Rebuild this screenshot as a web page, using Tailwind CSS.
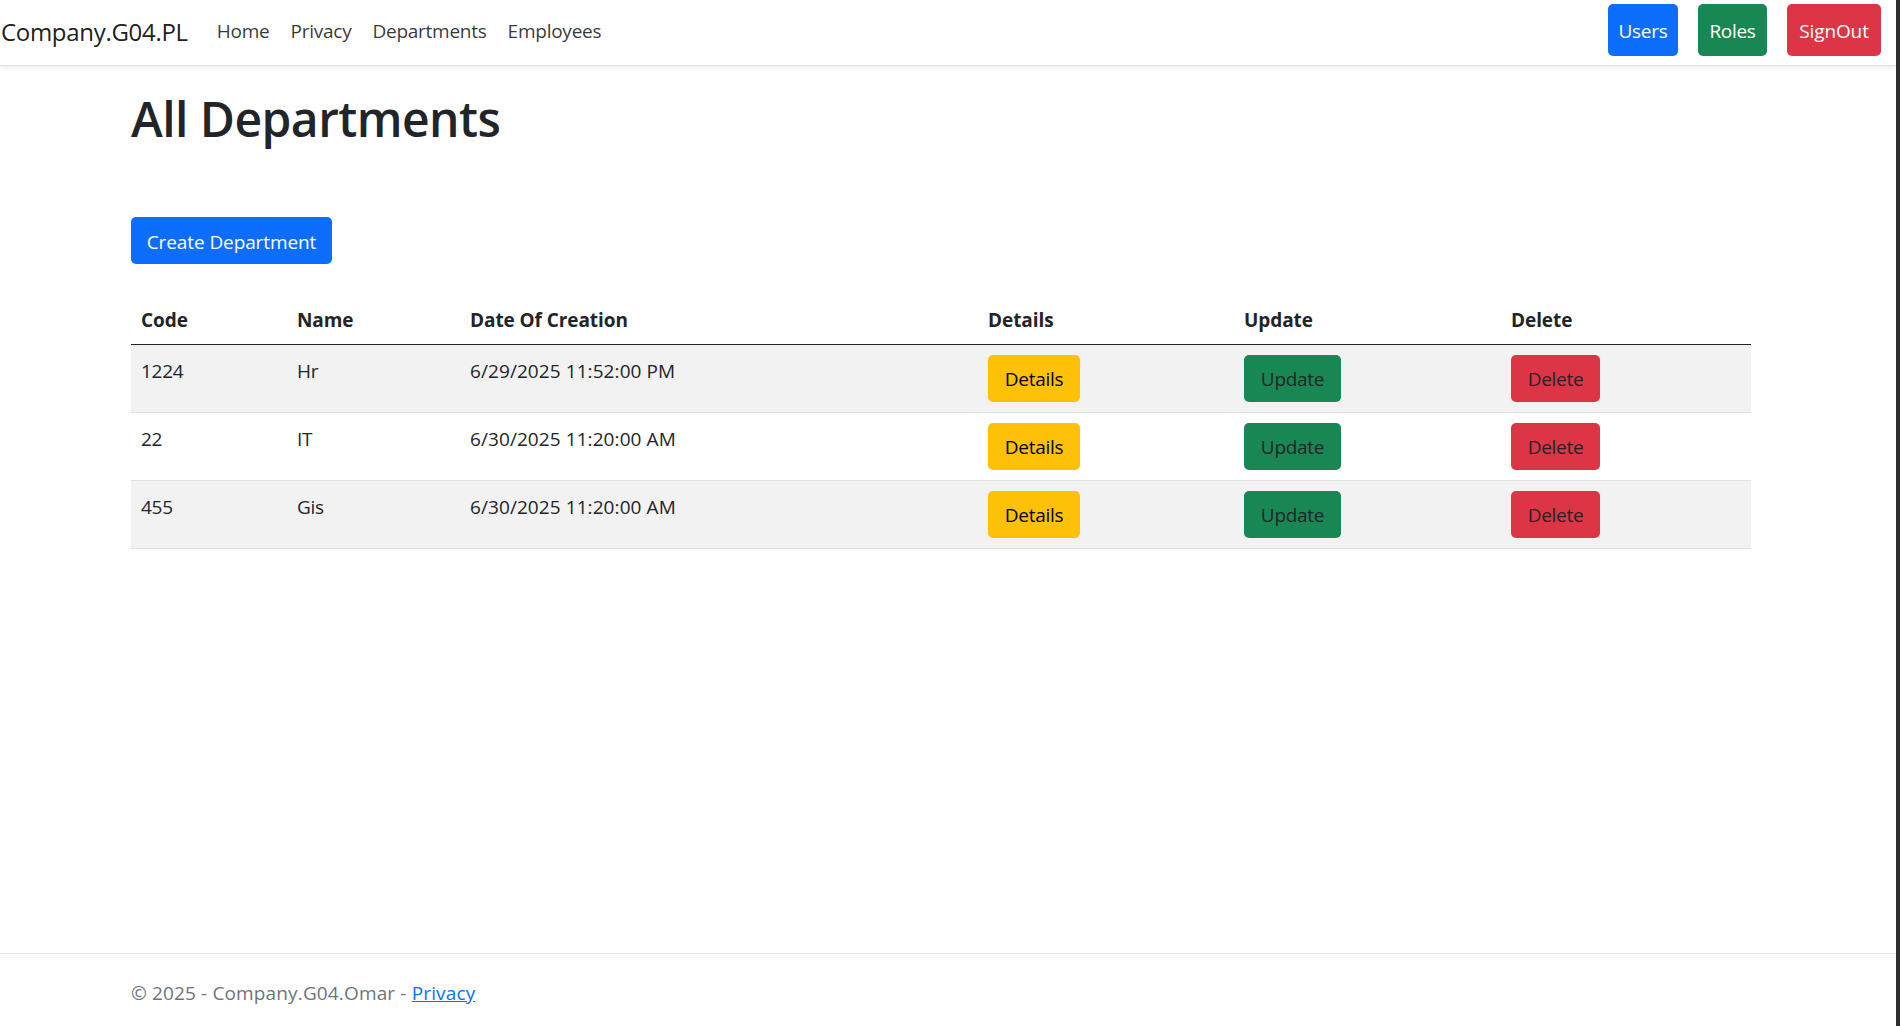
<!DOCTYPE html>
<html lang="en">
<head>
<meta charset="utf-8">
<title>All Departments</title>
<script src="https://cdn.jsdelivr.net/npm/@tailwindcss/browser@4"></script>
</head>
<body class="bg-white font-['Open_Sans','Noto_Sans',sans-serif] text-[19px] text-[#212529] tracking-[-0.3px] h-[1026px] overflow-hidden flex">
<div class="flex-1 min-w-0 flex flex-col">
<header class="h-[66px] shrink-0 flex items-center border-b border-[#dee2e6] shadow-[0_2px_5px_rgba(0,0,0,0.08)] pl-px pr-[15px] pb-[2px]">
  <a class="text-[24px] text-black/90 mr-[29px]">Company.G04.PL</a>
  <nav class="flex gap-[21px] text-black/80 tracking-[-0.25px]">
    <a>Home</a><a>Privacy</a><a>Departments</a><a>Employees</a>
  </nav>
  <div class="ml-auto flex gap-5 text-white self-start mt-[4px]">
    <a class="h-[52px] w-[70px] pt-[3px] flex items-center justify-center rounded-[5px] bg-[#0d6efd]">Users</a>
    <a class="h-[52px] w-[69px] pt-[3px] flex items-center justify-center rounded-[5px] bg-[#198754]">Roles</a>
    <a class="h-[52px] w-[94px] pt-[3px] flex items-center justify-center rounded-[5px] bg-[#dc3545] tracking-[-0.1px]">SignOut</a>
  </div>
</header>
<main class="flex-1 pl-[131px] pr-[145px]">
  <h1 class="text-[48px] font-semibold leading-[58px] mt-[24px] tracking-[-0.55px]">All Departments</h1>
  <a class="inline-flex items-center justify-center h-[47px] w-[201px] mt-[69px] pt-[4px] rounded-[5px] bg-[#0d6efd] text-white tracking-[-0.1px]">Create Department</a>
  <table class="w-[1620px] mt-[24px] table-fixed border-collapse">
    <thead>
      <tr class="h-[56px] border-b-[1.5px] border-[#212529] text-left font-bold tracking-[-0.08px]">
        <th class="w-[156px] pl-[10px] pt-[9px]">Code</th>
        <th class="w-[173px] pl-[10px] pt-[9px]">Name</th>
        <th class="w-[518px] pl-[10px] pt-[9px]">Date Of Creation</th>
        <th class="w-[256px] pl-[10px] pt-[9px]">Details</th>
        <th class="w-[267px] pl-[10px] pt-[9px]">Update</th>
        <th class="pl-[10px] pt-[9px]">Delete</th>
      </tr>
    </thead>
    <tbody>
      <tr class="h-[68px] bg-[#f2f2f2] border-b border-[#dee2e6] align-top">
        <td class="pl-[10px] pt-[12px]">1224</td><td class="pl-[10px] pt-[12px]">Hr</td><td class="pl-[10px] pt-[12px] tracking-[0.08px]">6/29/2025 11:52:00 PM</td>
        <td class="pl-[10px] pt-[10px]"><a class="inline-flex items-center justify-center h-[47px] w-[92px] pt-[3px] rounded-[5px] bg-[#ffc107] text-black">Details</a></td>
        <td class="pl-[10px] pt-[10px]"><a class="inline-flex items-center justify-center h-[47px] w-[97px] pt-[3px] rounded-[5px] bg-[#198754]">Update</a></td>
        <td class="pl-[10px] pt-[10px]"><a class="inline-flex items-center justify-center h-[47px] w-[89px] pt-[3px] rounded-[5px] bg-[#dc3545]">Delete</a></td>
      </tr>
      <tr class="h-[68px] border-b border-[#dee2e6] align-top">
        <td class="pl-[10px] pt-[12px]">22</td><td class="pl-[10px] pt-[12px]">IT</td><td class="pl-[10px] pt-[12px] tracking-[0.08px]">6/30/2025 11:20:00 AM</td>
        <td class="pl-[10px] pt-[10px]"><a class="inline-flex items-center justify-center h-[47px] w-[92px] pt-[3px] rounded-[5px] bg-[#ffc107] text-black">Details</a></td>
        <td class="pl-[10px] pt-[10px]"><a class="inline-flex items-center justify-center h-[47px] w-[97px] pt-[3px] rounded-[5px] bg-[#198754]">Update</a></td>
        <td class="pl-[10px] pt-[10px]"><a class="inline-flex items-center justify-center h-[47px] w-[89px] pt-[3px] rounded-[5px] bg-[#dc3545]">Delete</a></td>
      </tr>
      <tr class="h-[68px] bg-[#f2f2f2] border-b border-[#dee2e6] align-top">
        <td class="pl-[10px] pt-[12px]">455</td><td class="pl-[10px] pt-[12px]">Gis</td><td class="pl-[10px] pt-[12px] tracking-[0.08px]">6/30/2025 11:20:00 AM</td>
        <td class="pl-[10px] pt-[10px]"><a class="inline-flex items-center justify-center h-[47px] w-[92px] pt-[3px] rounded-[5px] bg-[#ffc107] text-black">Details</a></td>
        <td class="pl-[10px] pt-[10px]"><a class="inline-flex items-center justify-center h-[47px] w-[97px] pt-[3px] rounded-[5px] bg-[#198754]">Update</a></td>
        <td class="pl-[10px] pt-[10px]"><a class="inline-flex items-center justify-center h-[47px] w-[89px] pt-[3px] rounded-[5px] bg-[#dc3545]">Delete</a></td>
      </tr>
    </tbody>
  </table>
</main>
<footer class="h-[73px] shrink-0 border-t border-[#e5e5e5] pl-[131px] pt-[7px] flex items-center text-[#6c757d] tracking-[0.14px]">
  <span>© 2025 - Company.G04.Omar - <a class="text-[#0d6efd] underline">Privacy</a></span>
</footer>
</div>
<div class="w-[4px] shrink-0 bg-[#2e2e2e]"></div>
</body>
</html>
